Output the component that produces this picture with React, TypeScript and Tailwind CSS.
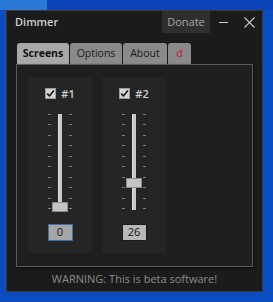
import React from "react";

const ticks = Array.from({ length: 10 }, (_, i) => i);

const screens = [
  { id: 1, value: 0, focused: true },
  { id: 2, value: 26, focused: false },
];

function CheckBox() {
  return (
    <div className="w-[11px] h-[11px] bg-[#d4d4d4] border border-[#9a9a9a] flex items-center justify-center">
      <svg width="9" height="9" viewBox="0 0 9 9">
        <path d="M1.2 4.6 L3.5 6.9 L7.9 1.6" stroke="#111" strokeWidth="1.6" fill="none" />
      </svg>
    </div>
  );
}

function Slider({ value }: { value: number }) {
  return (
    <div className="relative w-[30px] h-[95px] flex justify-center">
      <div className="flex flex-col justify-between w-[24px]">
        {ticks.map((t) => (
          <div key={t} className="flex justify-between">
            <span className="w-[3px] h-[1px] bg-[#7c7c7c]" />
            <span className="w-[3px] h-[1px] bg-[#7c7c7c]" />
          </div>
        ))}
      </div>
      <div className="absolute left-[13px] top-0 w-[4px] h-[96px] bg-[#c8c8c8] border-l border-[#e0e0e0]" />
      <div
        className="absolute left-[7px] w-[16px] h-[10px] bg-[#c4c4c4] border border-[#8c8c8c]"
        style={{ top: `${(1 - value / 100) * 93 - 5}px` }}
      />
    </div>
  );
}

export default function App() {
  return (
    <div className="w-[273px] h-[302px] bg-[#0b4cc0] overflow-hidden font-['Open_Sans','Noto_Sans',sans-serif]">
      <div className="h-[10px] flex">
        <div className="w-[47px] bg-[#2a78d6]" />
        <div className="flex-1 bg-[#0a45b8]" />
      </div>
      <div className="ml-[6px] w-[257px] h-[282px] bg-[#1b1b1b] border border-[#3a3a3a] flex flex-col">
        <div className="h-[22px] flex items-center">
          <span className="pl-[8px] flex-1 text-[11px] font-semibold text-[#cfcfcf]">Dimmer</span>
          <div className="h-[22px] w-[48px] bg-[#2e2e2e] flex items-center justify-center text-[11px] text-[#a8a8a8]">
            Donate
          </div>
          <div className="w-[26px] flex items-center justify-center">
            <span className="w-[9px] h-[1px] bg-[#c8c8c8]" />
          </div>
          <div className="w-[26px] flex items-center justify-center">
            <svg width="11" height="11" viewBox="0 0 11 11">
              <path d="M0.5 0.5 L10.5 10.5 M10.5 0.5 L0.5 10.5" stroke="#c8c8c8" strokeWidth="1.1" />
            </svg>
          </div>
        </div>

        <div className="mt-[10px] mx-[9px] flex flex-col">
          <div className="flex pl-[1px] gap-[1px] text-[10.5px]">
            <div className="w-[52px] h-[21px] bg-[#a9a9a9] rounded-t-[3px] flex items-center justify-center font-bold text-[#111]">
              Screens
            </div>
            <div className="w-[52px] h-[21px] bg-[#8a8a8a] rounded-t-[3px] flex items-center justify-center text-[#1a1a1a]">
              Options
            </div>
            <div className="w-[44px] h-[21px] bg-[#8a8a8a] rounded-t-[3px] flex items-center justify-center text-[#1a1a1a]">
              About
            </div>
            <div className="w-[23px] h-[21px] bg-[#8a8a8a] rounded-t-[3px] flex items-center justify-center text-[#c0141c]">
              d
            </div>
          </div>
          <div className="h-[203px] bg-[#1f1f1f] border border-[#5a5a5a] pt-[12px] pl-[11px] flex gap-[10px] shadow-[1px_1px_2px_rgba(0,0,0,0.6)]">
            {screens.map((s) => (
              <div key={s.id} className="w-[64px] h-[176px] bg-[#252525] flex flex-col items-center">
                <div className="mt-[11px] flex items-center gap-[5px]">
                  <CheckBox />
                  <span className="text-[11px] leading-[11px] font-semibold text-[#d0d0d0]">#{s.id}</span>
                </div>
                <div className="mt-[15px]">
                  <Slider value={s.value} />
                </div>
                <div
                  className={
                    s.focused
                      ? "mt-[15px] w-[25px] h-[17px] bg-[#a6a6a6] border border-[#3b6db5] flex items-center justify-center text-[11px] text-[#111]"
                      : "mt-[15px] w-[25px] h-[17px] bg-[#b8b8b8] border border-[#1a1a1a] flex items-center justify-center text-[11px] text-[#111]"
                  }
                >
                  {s.value}
                </div>
              </div>
            ))}
          </div>
        </div>

        <div className="flex-1 flex items-center justify-center text-[11px] text-[#8c8c8c]">
          WARNING: This is beta software!
        </div>
      </div>
    </div>
  );
}
